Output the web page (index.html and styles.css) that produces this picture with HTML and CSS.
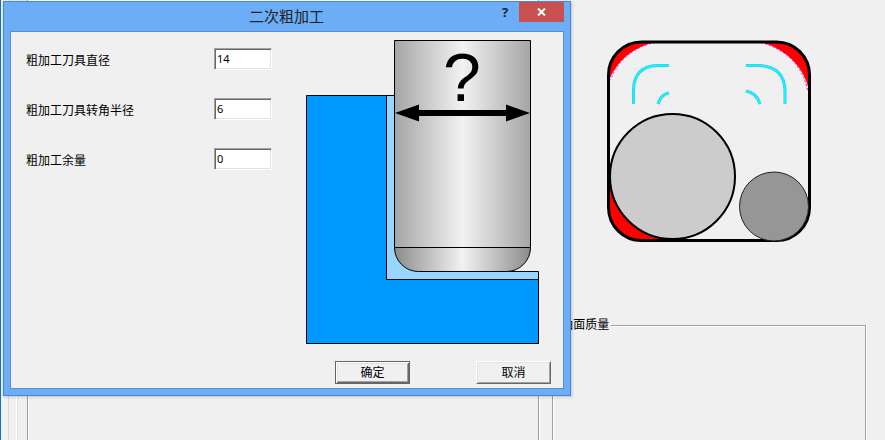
FILE: index.html
```html
<!DOCTYPE html>
<html lang="zh-CN">
<head>
<meta charset="utf-8">
<title>二次粗加工</title>
<link rel="stylesheet" href="styles.css">
</head>
<body>
<div class="desktop">
  <main class="sheet">
    <div class="page">
      <section class="column column-main">
        <fieldset class="group"></fieldset>
      </section>
      <section class="column column-side">
        <svg class="pocket" width="204" height="204" viewBox="607 40 204 204" role="img" aria-label="残料加工示意图">
          <path class="remnant" d="M609 80V74A32 32 0 0 1 641 42H655Q622 50 609 80Z"/>
          <path class="remnant" d="M761 42H777A32 32 0 0 1 809 74V90Q800 54 761 42Z"/>
          <path class="remnant" d="M609 176V208A32 32 0 0 0 641 240H672Z"/>
          <g class="remnant-edge">
            <path d="M655 42.500Q622 50 610.500 80"/>
            <path d="M761 42.500Q800 54 807.500 90"/>
          </g>
          <rect class="outline" x="608.500" y="42" width="201" height="198.500" rx="33"/>
          <g class="pass-edge">
            <path d="M633.500 104V90Q634 66 658 65.500H669"/>
            <path d="M658 104Q661 94 669 93"/>
            <path d="M746 65.500H760Q784 67 785 90V104"/>
            <path d="M746 91Q757 93 760 104"/>
          </g>
          <g class="pass">
            <path d="M633.500 104V90Q634 66 658 65.500H669"/>
            <path d="M658 104Q661 94 669 93"/>
            <path d="M746 65.500H760Q784 67 785 90V104"/>
            <path d="M746 91Q757 93 760 104"/>
          </g>
          <circle class="cutter-large" cx="672.500" cy="176.500" r="62.500"/>
          <circle class="cutter-small" cx="774" cy="206.500" r="34.500"/>
        </svg>
        <fieldset class="group">
          <legend>曲面质量</legend>
        </fieldset>
      </section>
    </div>
  </main>

  <form class="dialog" role="dialog" aria-labelledby="dialog-title">
    <header class="titlebar">
      <h1 id="dialog-title">二次粗加工</h1>
      <button type="button" class="help" aria-label="帮助">?</button>
      <button type="button" class="close" aria-label="关闭">
        <svg width="9" height="8" viewBox="0 0 9 8"><path d="M1 .5 8 7.500M8 .5 1 7.500"/></svg>
      </button>
    </header>
    <div class="client">
      <div class="content">
        <div class="fields">
          <label for="diameter">粗加工刀具直径</label>
          <input id="diameter" type="text" value="14">
          <label for="radius">粗加工刀具转角半径</label>
          <input id="radius" type="text" value="6">
          <label for="allowance">粗加工余量</label>
          <input id="allowance" type="text" value="0">
        </div>
        <svg class="diagram" width="233" height="304" viewBox="306 40 233 304" role="img" aria-label="刀具直径示意图">
          <defs>
            <linearGradient id="shank">
              <stop offset="0" stop-color="#a5a5a5"/>
              <stop offset=".5" stop-color="#f2f2f2"/>
              <stop offset="1" stop-color="#a5a5a5"/>
            </linearGradient>
            <linearGradient id="tip">
              <stop offset="0" stop-color="#8c8c8c"/>
              <stop offset=".5" stop-color="#f2f2f2"/>
              <stop offset="1" stop-color="#8c8c8c"/>
            </linearGradient>
          </defs>
          <g stroke="#000" stroke-width="1">
            <path fill="#99d6ff" d="M386.500 95.500H430V271.500H538.500V279.500H386.500Z"/>
            <path fill="#0099ff" d="M306.500 95.500H386.500V279.500H538.500V343.500H306.500Z"/>
            <path fill="url(#tip)" d="M394.500 247.500H530.500A24 24 0 0 1 506.500 271.500H418.500A24 24 0 0 1 394.500 247.500Z"/>
            <path fill="url(#shank)" d="M394.500 40.500H530.500V247.500H394.500Z"/>
          </g>
          <path d="M395 113 419 104.500V110H506V104.500L530 113 506 121.500V116H419V121.500Z"/>
          <text class="unknown" x="462" y="101" text-anchor="middle">?</text>
        </svg>
      </div>
      <footer class="actions">
        <button type="submit" class="button button-default">确定</button>
        <button type="button" class="button">取消</button>
      </footer>
    </div>
  </form>
</div>
</body>
</html>
```

FILE: styles.css
```css
* {
  box-sizing: border-box;
}

body {
  margin: 0;
  background: #f0f0f0;
  color: #000;
  font: 12px/16px "Liberation Sans", "Noto Sans CJK SC", sans-serif;
}

.desktop {
  position: relative;
  min-height: 100vh;
  display: flex;
  border-left: 1px solid #0078d0;
  overflow: hidden;
}

.sheet {
  flex: 1;
  display: flex;
  margin-left: 7px;
  padding-left: 7px;
  border-left: 1px solid #d9d9d9;
}

.page {
  flex: 1;
  display: flex;
  gap: 12px;
  padding: 0 18px 0 10px;
  border-left: 1px solid #fff;
  box-shadow: inset 1px 0 #e3e3e3;
}

.column {
  display: flex;
  flex-direction: column;
}

.column-main {
  flex: 512 1 0;
}

.column-side {
  flex: 314 1 0;
}

.group {
  flex: 1;
  min-width: 0;
  margin: 0 1px 0 0;
  padding: 0 8px;
  border: 1px solid #a0a0a0;
  border-width: 1px 1px 0;
  box-shadow: 1px 0 #fff, inset 1px 1px #fff;
}

.column-main .group {
  border-top: 0;
}

.group legend {
  padding: 0 2px 0 0;
  background: #f0f0f0;
}

.pocket {
  margin: 40px 0 73px 55px;
}

.remnant {
  fill: #f00;
}

.remnant-edge {
  fill: none;
  stroke: #f0f;
  stroke-width: 1;
  stroke-dasharray: 2 2;
}

.outline {
  fill: none;
  stroke: #000;
  stroke-width: 3;
}

.pass,
.pass-edge {
  fill: none;
  stroke: #0ff;
  stroke-width: 2;
}

.pass-edge {
  stroke: #65a9e0;
  stroke-width: 3;
}

.cutter-large {
  fill: #ccc;
  stroke: #000;
  stroke-width: 2;
}

.cutter-small {
  fill: #969696;
  stroke: #222;
  stroke-width: 1;
}

.dialog {
  position: absolute;
  top: 1px;
  left: 2px;
  margin: 0;
  padding: 0 6px 6px;
  border: 1px solid #4c87c9;
  background: #6badf6;
  box-shadow: 1px 1px 3px rgba(0, 0, 0, .2);
}

.titlebar {
  display: flex;
  align-items: flex-start;
  height: 29px;
}

.titlebar h1 {
  flex: 1;
  margin: 0;
  padding-left: 72px;
  font-size: 15px;
  font-weight: 400;
  line-height: 29px;
  text-align: center;
  color: #222;
}

.help,
.close {
  padding: 0;
  border: 0;
  background: none;
}

.help {
  width: 28px;
  height: 20px;
  font: bold 13px/20px "Noto Sans", sans-serif;
  color: #222;
}

.close {
  display: grid;
  place-items: center;
  width: 45px;
  height: 20px;
  background: #c75050;
}

.close path {
  stroke: #fff;
  stroke-width: 2;
}

.client {
  border: 1px solid #5490d3;
  background: #f0f0f0;
  padding: 8px 12px 4px 15px;
}

.content {
  display: flex;
  gap: 34px;
  padding-right: 12px;
}

.fields {
  display: grid;
  grid-template-columns: 188px 58px;
  grid-auto-rows: 22px;
  row-gap: 28px;
  align-content: start;
  padding-top: 8px;
}

.fields label {
  padding-top: 5px;
}

.fields input {
  width: 100%;
  height: 22px;
  padding: 0 2px 2px;
  border: 1px solid;
  border-color: #a0a0a0 #fff #fff #a0a0a0;
  border-radius: 0;
  background: #fff;
  box-shadow: inset 1px 1px #696969, inset -1px -1px #e3e3e3;
  color: #000;
  font: 11px/16px "Noto Sans", sans-serif;
}

.diagram {
  display: block;
  overflow: visible;
}

.unknown {
  font: 68px "Liberation Sans", sans-serif;
}

.actions {
  display: flex;
  justify-content: flex-end;
  gap: 66px;
  padding-top: 17px;
}

.button {
  width: 75px;
  height: 23px;
  padding: 0;
  border: 1px solid;
  border-color: #fff #696969 #696969 #fff;
  background: #f0f0f0;
  box-shadow: inset 1px 1px #e3e3e3, inset -1px -1px #a0a0a0;
  color: #000;
  font: inherit;
}

.button-default {
  border-color: #646464;
  box-shadow: inset 1px 1px #fff, inset -1px -1px #696969, inset 2px 2px #e3e3e3, inset -2px -2px #a0a0a0;
}
```
